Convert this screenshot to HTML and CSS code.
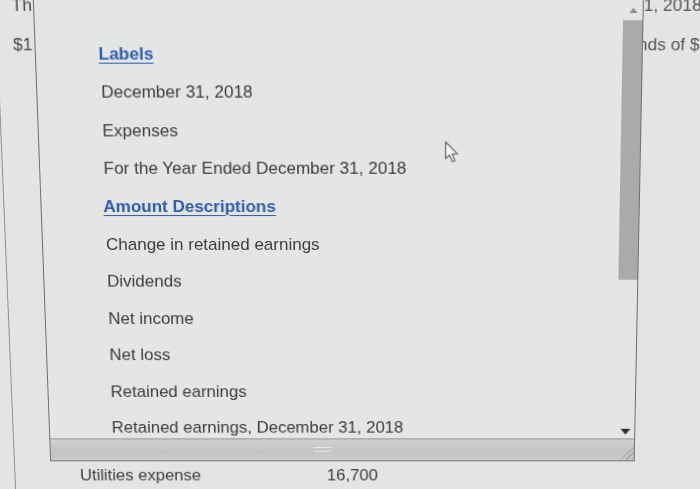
FILE: index.html
```html
<!DOCTYPE html>
<html>
<head>
<meta charset="utf-8">
<link rel="stylesheet" href="styles.css">
</head>
<body>
<div class="screen">
  <div class="page">
    <div class="page-row first">
      <span class="th">Th</span>
      <span class="peek">31, 2018</span>
    </div>
    <div class="page-row second">
      <span class="dollar">$1</span>
      <span class="peek">nds of $</span>
    </div>
    <div class="spacer"></div>
    <div class="page-row bottom">
      <span class="util">Utilities expense</span>
      <span class="amt">16,700</span>
    </div>
    <div class="edge-line"></div>
  </div>

  <div class="dropdown">
    <div class="list-area">
      <ul class="options">
        <li class="group">Labels</li>
        <li class="opt">December 31, 2018</li>
        <li class="opt">Expenses</li>
        <li class="opt">For the Year Ended December 31, 2018</li>
        <li class="group">Amount Descriptions</li>
        <li class="opt">Change in retained earnings</li>
        <li class="opt">Dividends</li>
        <li class="opt">Net income</li>
        <li class="opt">Net loss</li>
        <li class="opt">Retained earnings</li>
        <li class="opt">Retained earnings, December 31, 2018</li>
      </ul>
      <div class="scrollbar">
        <div class="arrow-up"></div>
        <div class="thumb"></div>
        <div class="track"></div>
        <div class="arrow-down"></div>
      </div>
    </div>
    <div class="footer-bar">
      <div class="grip"></div>
      <div class="resize"></div>
    </div>
  </div>

  <svg class="cursor" width="16" height="24" viewBox="0 0 16 24">
    <path d="M1.5 1.5 L1.5 18 L5.3 14.4 L8.2 21 L10.8 19.9 L8 13.4 L13.2 13.2 Z" fill="#f4f5f4" stroke="#6a6c6a" stroke-width="1.2" stroke-linejoin="round"/>
  </svg>
</div>
</body>
</html>
```

FILE: styles.css
```css
* { box-sizing: border-box; }
html, body {
  margin: 0;
  padding: 0;
  width: 700px;
  height: 489px;
  overflow: hidden;
  background: #e2e5e2;
  font-family: "Liberation Sans", Arial, sans-serif;
}
.screen {
  position: relative;
  width: 700px;
  height: 500px;
  overflow: hidden;
  background: #e2e5e2;
  transform-origin: 350px 244.5px;
  transform: perspective(1000px) rotateX(-5.5deg) skewX(0.45deg);
}
.page {
  display: flex;
  flex-direction: column;
  height: 500px;
  color: #4a4c4a;
  font-size: 17px;
  position: relative;
}
.page-row {
  display: grid;
  white-space: nowrap;
}
.page-row.first {
  margin-top: -1px;
  height: 22px;
  line-height: 22px;
  padding-left: 21px;
  grid-template-columns: 608.5px auto;
}
.page-row.second {
  margin-top: 17px;
  height: 20px;
  line-height: 20px;
  padding-left: 21px;
  grid-template-columns: 613px auto;
}
.peek { color: #555755; }
.spacer { flex: 1; }
.page-row.bottom {
  height: 26px;
  line-height: 26px;
  margin-bottom: 4.6px;
  color: #3c3e3c;
  grid-template-columns: 324.6px auto;
}
.util { padding-left: 72px; }
.edge-line {
  position: absolute;
  left: 5px;
  top: 72px;
  bottom: 0;
  width: 1px;
  background: #8e908e;
}

.dropdown {
  position: absolute;
  z-index: 2;
  left: 42px;
  top: 0;
  width: 597px;
  height: 466.6px;
  border: 1px solid #6e706e;
  border-top: none;
  display: grid;
  grid-template-rows: 1fr 23px;
  background: #e3e6e3;
}
.list-area {
  display: grid;
  grid-template-columns: 1fr 19px;
  min-height: 0;
}
.options {
  list-style: none;
  margin: 0;
  padding: 37.8px 0 0 0;
  font-size: 17px;
}
.options li {
  height: 37.56px;
  line-height: 37.56px;
  white-space: nowrap;
}
.opt {
  padding-left: 63px;
  color: #3b3d3b;
}
.group {
  padding-left: 61.5px;
  color: #2d5cb4;
  font-weight: bold;
  text-decoration: underline;
  text-underline-offset: 3px;
  text-decoration-thickness: 1px;
}
.scrollbar {
  display: flex;
  flex-direction: column;
  align-items: center;
}
.arrow-up {
  margin-top: 11.5px;
  width: 0;
  height: 0;
  border-left: 4px solid transparent;
  border-right: 4px solid transparent;
  border-bottom: 5px solid #8a8c8a;
}
.thumb {
  margin-top: 7.5px;
  width: 19px;
  height: 256px;
  background: #a9aaa9;
}
.track { flex: 1; }
.arrow-down {
  margin-bottom: 11.6px;
  width: 0;
  height: 0;
  border-left: 5px solid transparent;
  border-right: 5px solid transparent;
  border-top: 6px solid #2e302e;
}
.footer-bar {
  position: relative;
  border-top: 1px solid #8f918f;
  background: linear-gradient(#cfd1cf, #c3c5c3 60%, #cacdca);
  display: flex;
  justify-content: center;
  align-items: center;
}
.grip {
  width: 18px;
  height: 5px;
  border-top: 1px solid #e8eae8;
  border-bottom: 1px solid #e8eae8;
  margin-right: 41px;
}
.resize {
  position: absolute;
  right: 0;
  bottom: 0;
  width: 18px;
  height: 18px;
  background: repeating-linear-gradient(135deg, transparent 0 3px, #9c9e9c 3px 4px);
  clip-path: polygon(100% 0, 100% 100%, 0 100%);
}
.cursor {
  position: absolute;
  z-index: 3;
  left: 444px;
  top: 141px;
}
```
